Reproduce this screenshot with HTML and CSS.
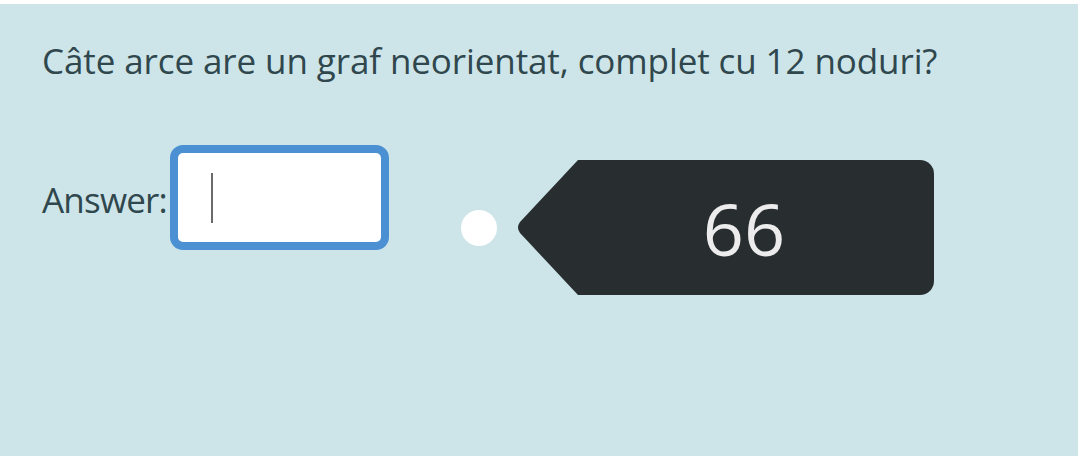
FILE: index.html
```html
<!DOCTYPE html>
<html lang="ro">
<head>
<meta charset="utf-8">
<title>Quiz</title>
<link rel="stylesheet" href="styles.css">
</head>
<body>
<div class="panel">
  <p class="question">Câte arce are un graf neorientat, complet cu 12 noduri?</p>
  <div class="row">
    <label class="label" for="ans">Answer:</label>
    <div class="input"><span class="caret"></span></div>
    <span class="dot"></span>
    <div class="tag">
      <svg class="tag-point" width="62" height="135" viewBox="0 0 62 135"><path d="M62 0 L4 62 Q0 67.5 4 73 L62 135 Z" fill="#282d30"/></svg>
      <div class="tag-body">66</div>
    </div>
  </div>
</div>
</body>
</html>
```
FILE: styles.css
```css
html, body { margin: 0; padding: 0; background: #ffffff; }
body { width: 1078px; height: 459px; overflow: hidden; }
.panel {
  margin-top: 4px;
  height: 452px;
  background: #cde5e9;
  padding: 0 0 0 42px;
  box-sizing: border-box;
  font-family: "Open Sans", "Noto Sans", sans-serif;
  color: #2f474d;
  overflow: hidden;
}
.question {
  margin: 0;
  padding-top: 33px;
  font-size: 35px;
  line-height: 48px;
  letter-spacing: -0.1px;
  white-space: nowrap;
}
.row {
  display: flex;
  align-items: flex-start;
  margin-top: 60px;
}
.label {
  margin-top: 35px;
  font-size: 35px;
  line-height: 40px;
  letter-spacing: -0.8px;
}
.input {
  width: 219px;
  height: 105px;
  box-sizing: border-box;
  margin-left: 3px;
  border: 8px solid #4a90d2;
  border-radius: 13px;
  background: #ffffff;
  padding: 20px 0 0 33px;
}
.caret {
  display: block;
  width: 2px;
  height: 50px;
  background: #6a6a6a;
}
.dot {
  flex: none;
  width: 36px;
  height: 36px;
  border-radius: 50%;
  background: #ffffff;
  margin: 65px 0 0 72px;
}
.tag {
  display: flex;
  margin: 15px 0 0 19px;
}
.tag-point { display: block; flex: none; }
.tag-body {
  width: 356px;
  height: 135px;
  box-sizing: border-box;
  background: #282d30;
  border-radius: 0 14px 14px 0;
  color: #ececec;
  font-size: 72px;
  display: flex;
  align-items: center;
  justify-content: center;
  padding-right: 24px;
  line-height: 1;
}
```
